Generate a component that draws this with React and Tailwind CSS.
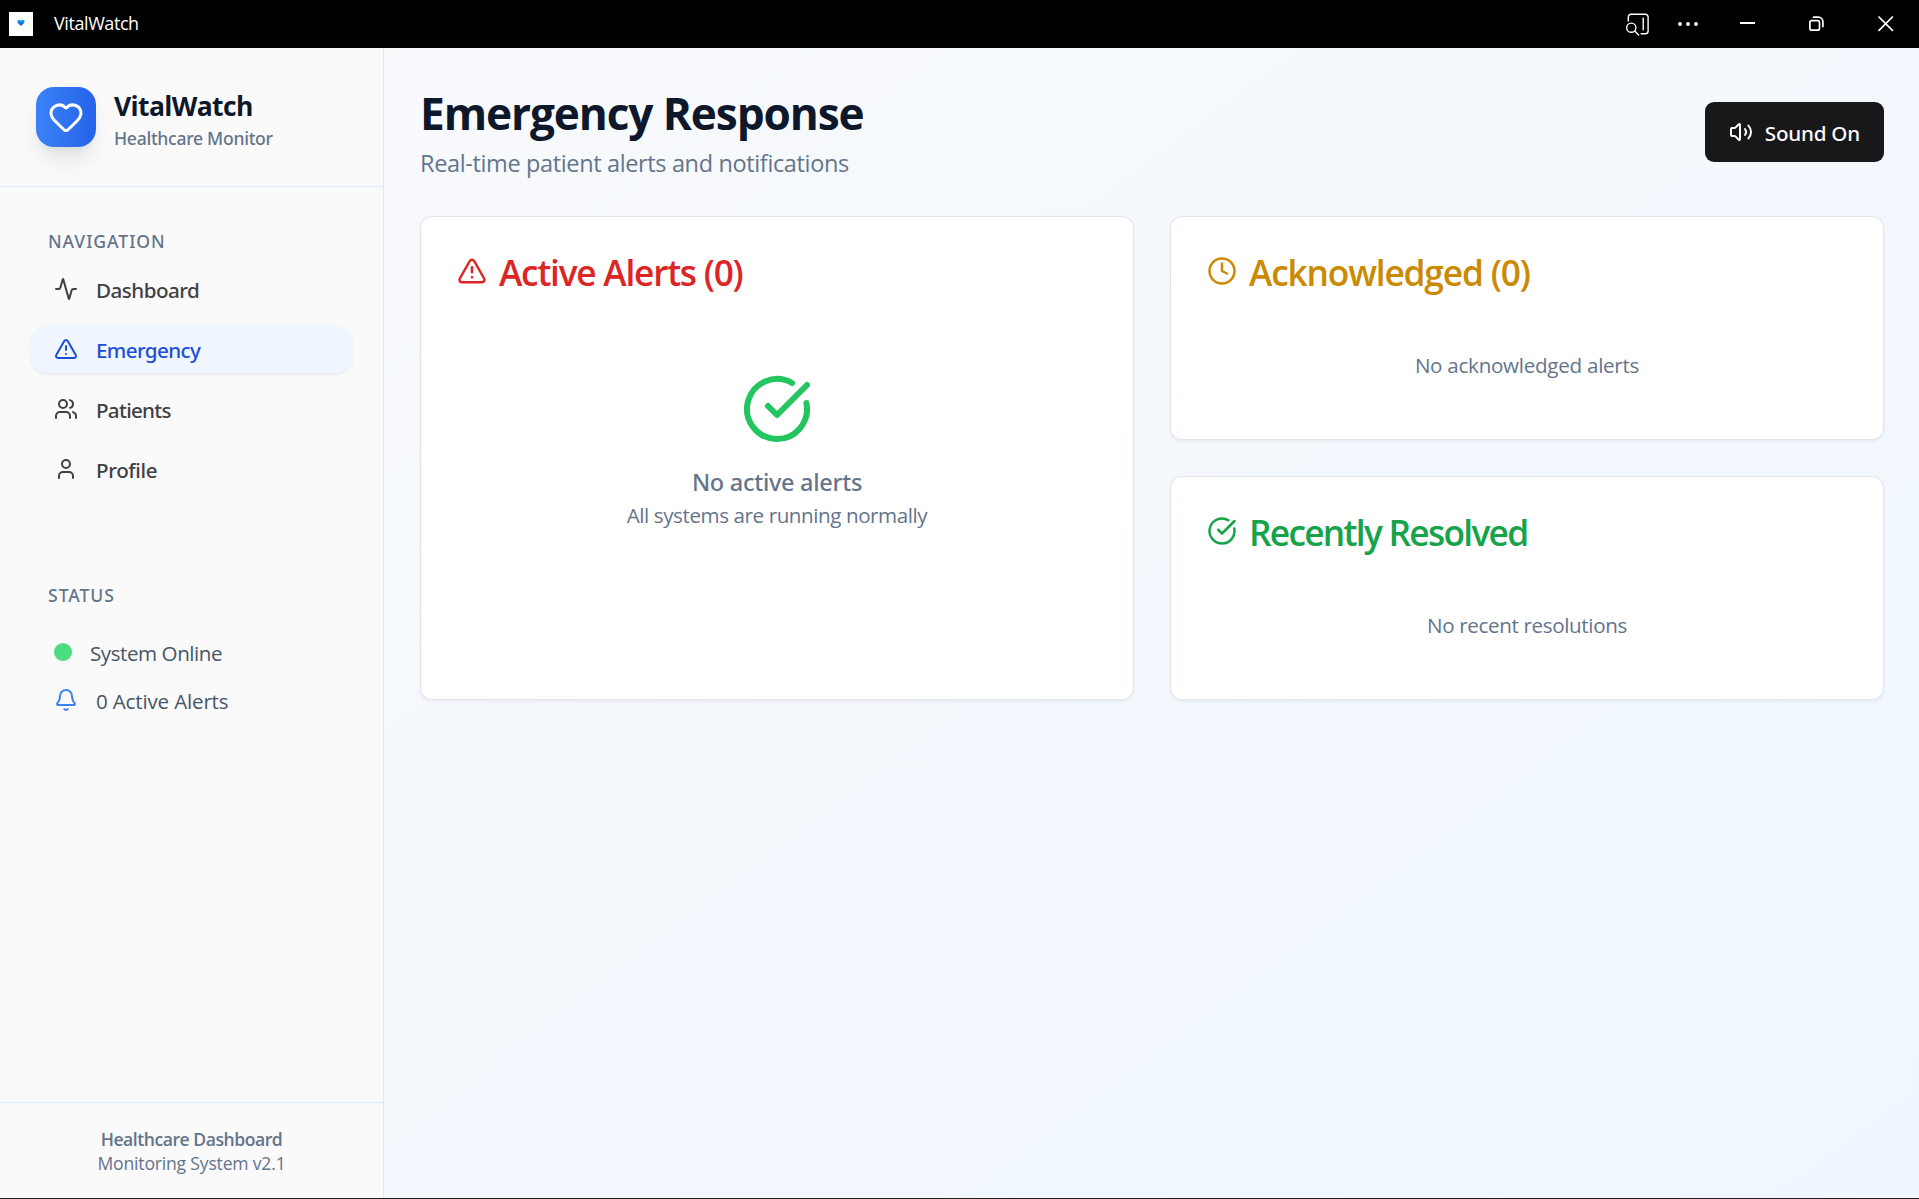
import React from "react";
import { Activity, Bell, CircleCheckBig, Clock, Heart, TriangleAlert, User, Users, Volume2 } from "lucide-react";

const NAV = [
  { label: "Dashboard", icon: Activity, tracking: "tracking-[-0.52px]" },
  { label: "Emergency", icon: TriangleAlert, tracking: "tracking-[-0.61px]", active: true },
  { label: "Patients", icon: Users, tracking: "tracking-[-0.7px]" },
  { label: "Profile", icon: User, tracking: "tracking-[-0.36px]" },
];

function TitleBar() {
  return (
    <header className="flex h-12 shrink-0 items-center bg-black pl-[9px] pr-[25px] text-white">
      <svg className="h-6 w-6 shrink-0" viewBox="0 0 24 24">
        <defs>
          <linearGradient id="heart" x1="0" y1="0" x2="0" y2="1">
            <stop offset="0" stopColor="#1fb6e0" />
            <stop offset="0.6" stopColor="#1668e8" />
            <stop offset="1" stopColor="#2a4fe0" />
          </linearGradient>
        </defs>
        <rect width="24" height="24" fill="#fff" />
        <path d="M12 14 L8.9 10.9 C7.2 8.6 10.2 6.4 12 8.6 C13.8 6.4 16.8 8.6 15.1 10.9 Z" fill="url(#heart)" />
      </svg>
      <span className="ml-[21px] pb-[2px] text-[18px] leading-[46px] tracking-[-0.42px]">VitalWatch</span>
      <div className="ml-auto flex items-center">
        <svg className="h-6 w-6" viewBox="0 0 24 24" fill="none" stroke="#fff" strokeWidth="1.4" strokeLinecap="round" strokeLinejoin="round">
          <path d="M2.3 9V5a2.8 2.8 0 0 1 2.8-2.8h14.2A2.8 2.8 0 0 1 22.1 5v14a2.8 2.8 0 0 1-2.8 2.8h-4.2" />
          <path d="M17.2 6.3v11.5" />
          <circle cx="5.3" cy="15.7" r="4.6" />
          <path d="M8.7 19l4 4" />
        </svg>
        <svg className="ml-[26px] h-6 w-6" viewBox="0 0 24 24" fill="#fff">
          <circle cx="4" cy="12" r="1.9" />
          <circle cx="12" cy="12" r="1.9" />
          <circle cx="20" cy="12" r="1.9" />
        </svg>
        <svg className="ml-10 h-4 w-4" viewBox="0 0 16 16">
          <rect x="0" y="6" width="15" height="2" fill="#fff" />
        </svg>
        <svg className="ml-[53px] h-4 w-4" viewBox="0 0 16 16" fill="none" stroke="#fff" strokeWidth="1.7">
          <rect x="0.9" y="4.6" width="9.6" height="9.6" rx="2" />
          <path d="M4.6 1.2h4.7a4.6 4.6 0 0 1 4.6 4.6v4.8" strokeLinecap="round" />
        </svg>
        <svg className="ml-[53px] h-4 w-4" viewBox="0 0 16 16" fill="none" stroke="#fff" strokeWidth="1.7" strokeLinecap="round">
          <path d="M1 1l13.4 13.4M14.4 1L1 14.4" />
        </svg>
      </div>
    </header>
  );
}

function NavItem({ item }) {
  const Icon = item.icon;
  return (
    <a
      className={
        item.active
          ? "flex h-12 items-center gap-[18px] rounded-[18px] bg-[#eff6ff] px-6 text-[#1d4ed8] shadow-[0_1.5px_3px_rgba(0,0,0,0.06)]"
          : "flex h-12 items-center gap-[18px] rounded-[18px] px-6 text-[#3f3f46]"
      }
    >
      <Icon size={24} />
      <span className={`pt-[2px] font-['Noto_Sans',sans-serif] text-[20.6px] font-medium leading-7 ${item.tracking}`}>{item.label}</span>
    </a>
  );
}

function Sidebar() {
  return (
    <aside className="flex w-96 shrink-0 flex-col border-r border-[#dbe6fc] bg-[#fafafa]">
      <div className="flex h-[139px] items-center gap-[18px] border-b border-[#dbeafe] px-9">
        <div className="flex h-[60px] w-[60px] items-center justify-center rounded-[18px] bg-linear-to-r/srgb from-[#3b82f6] to-[#2563eb] text-white shadow-[0_15px_22px_-4px_rgba(0,0,0,0.1),0_6px_9px_-6px_rgba(0,0,0,0.1)]">
          <Heart size={36} />
        </div>
        <div>
          <div className="text-[26.5px] font-bold leading-[42px] tracking-[-0.63px] text-[#0f172a]">VitalWatch</div>
          <div className="font-['Noto_Sans',sans-serif] text-[17.6px] font-medium leading-[22px] tracking-[-0.29px] text-[#64748b]">Healthcare Monitor</div>
        </div>
      </div>
      <div className="flex-1 px-[30px] pt-[42px]">
        <div className="px-[18px] font-['Noto_Sans',sans-serif] text-[17.6px] font-medium leading-6 tracking-[0.95px] text-[#64748b]">NAVIGATION</div>
        <nav className="mt-3 flex flex-col gap-3">
          {NAV.map((item) => (
            <NavItem key={item.label} item={item} />
          ))}
        </nav>
        <div className="mt-[90px] px-[18px] font-['Noto_Sans',sans-serif] text-[17.6px] font-medium leading-6 tracking-[0.95px] text-[#64748b]">STATUS</div>
        <div className="mt-[27px] flex flex-col gap-3 px-6 text-[20.6px] leading-7 text-[#475569]">
          <div className="flex h-9 items-center gap-[18px]">
            <span className="h-[18px] w-[18px] rounded-full bg-[#4ade80] shadow-[0_1.5px_3px_rgba(0,0,0,0.06)]" />
            <span className="pt-[2px] tracking-[-0.45px]">System Online</span>
          </div>
          <div className="flex h-9 items-center gap-[18px]">
            <Bell size={24} className="text-[#3b82f6]" />
            <span className="pt-[2px] tracking-[-0.18px]">0 Active Alerts</span>
          </div>
        </div>
      </div>
      <div className="h-24 border-t border-[#dbeafe] pt-6 text-center text-[17.6px] leading-6 text-[#64748b]">
        <div className="font-semibold tracking-[-0.48px]">Healthcare Dashboard</div>
        <div className="tracking-[-0.2px]">Monitoring System v2.1</div>
      </div>
    </aside>
  );
}

function Card({ icon: Icon, title, color, className = "", titleClass, children }) {
  return (
    <section className={`rounded-xl border border-[#e4e4e7] bg-white p-9 shadow-[0_1.5px_3px_rgba(0,0,0,0.05)] ${className}`}>
      <h2 className={`flex h-9 items-center gap-3 ${color}`}>
        <Icon size={30} />
        <span className={`whitespace-nowrap pt-[2px] text-[35.3px] font-semibold leading-[48px] ${titleClass}`}>{title}</span>
      </h2>
      {children}
    </section>
  );
}

export default function App() {
  return (
    <div className="flex h-[1199px] w-[1919px] flex-col overflow-hidden border-b border-[#202020] font-['Open_Sans','Noto_Sans',sans-serif]">
      <TitleBar />
      <div className="flex min-h-0 flex-1">
        <Sidebar />
        <main className="flex-1 bg-linear-to-br/srgb from-[#f8fafc] to-[#eff6ff] py-9 pl-9 pr-[35px]">
          <div className="flex h-24 items-center justify-between">
            <div>
              <h1 className="text-[44.2px] font-bold leading-[58px] tracking-[-1.1px] text-[#0f172a]">Emergency Response</h1>
              <p className="mt-1 text-[23.5px] leading-[34px] tracking-[-0.36px] text-[#64748b]">
                Real-time patient alerts and notifications
              </p>
            </div>
            <button className="flex h-[60px] items-center gap-3 rounded-[9px] bg-[#18181b] px-6 text-[#fafafa]">
              <Volume2 size={24} />
              <span className="pt-[2px] font-['Noto_Sans',sans-serif] text-[20.6px] font-medium leading-7 tracking-[-0.21px]">Sound On</span>
            </button>
          </div>
          <div className="mt-9 grid grid-cols-2 grid-rows-[224px_224px] gap-9">
            <Card icon={TriangleAlert} title="Active Alerts (0)" color="text-[#dc2626]" titleClass="tracking-[-1.24px]" className="row-span-2">
              <div className="mt-[84px] flex flex-col items-center text-[#64748b]">
                <CircleCheckBig size={72} className="text-[#22c55e]" />
                <p className="mt-[18px] font-['Noto_Sans',sans-serif] text-[23.5px] font-medium leading-[38px] tracking-[-0.28px]">No active alerts</p>
                <p className="text-[20.6px] leading-7 tracking-[-0.42px]">All systems are running normally</p>
              </div>
            </Card>
            <Card icon={Clock} title="Acknowledged (0)" color="text-[#ca8a04]" titleClass="tracking-[-1.18px]">
              <p className="mt-[62px] text-center text-[20.6px] leading-7 tracking-[-0.27px] text-[#64748b]">No acknowledged alerts</p>
            </Card>
            <Card icon={CircleCheckBig} title="Recently Resolved" color="text-[#16a34a]" titleClass="tracking-[-1.72px]">
              <p className="mt-[62px] text-center text-[20.6px] leading-7 tracking-[-0.35px] text-[#64748b]">No recent resolutions</p>
            </Card>
          </div>
        </main>
      </div>
    </div>
  );
}
